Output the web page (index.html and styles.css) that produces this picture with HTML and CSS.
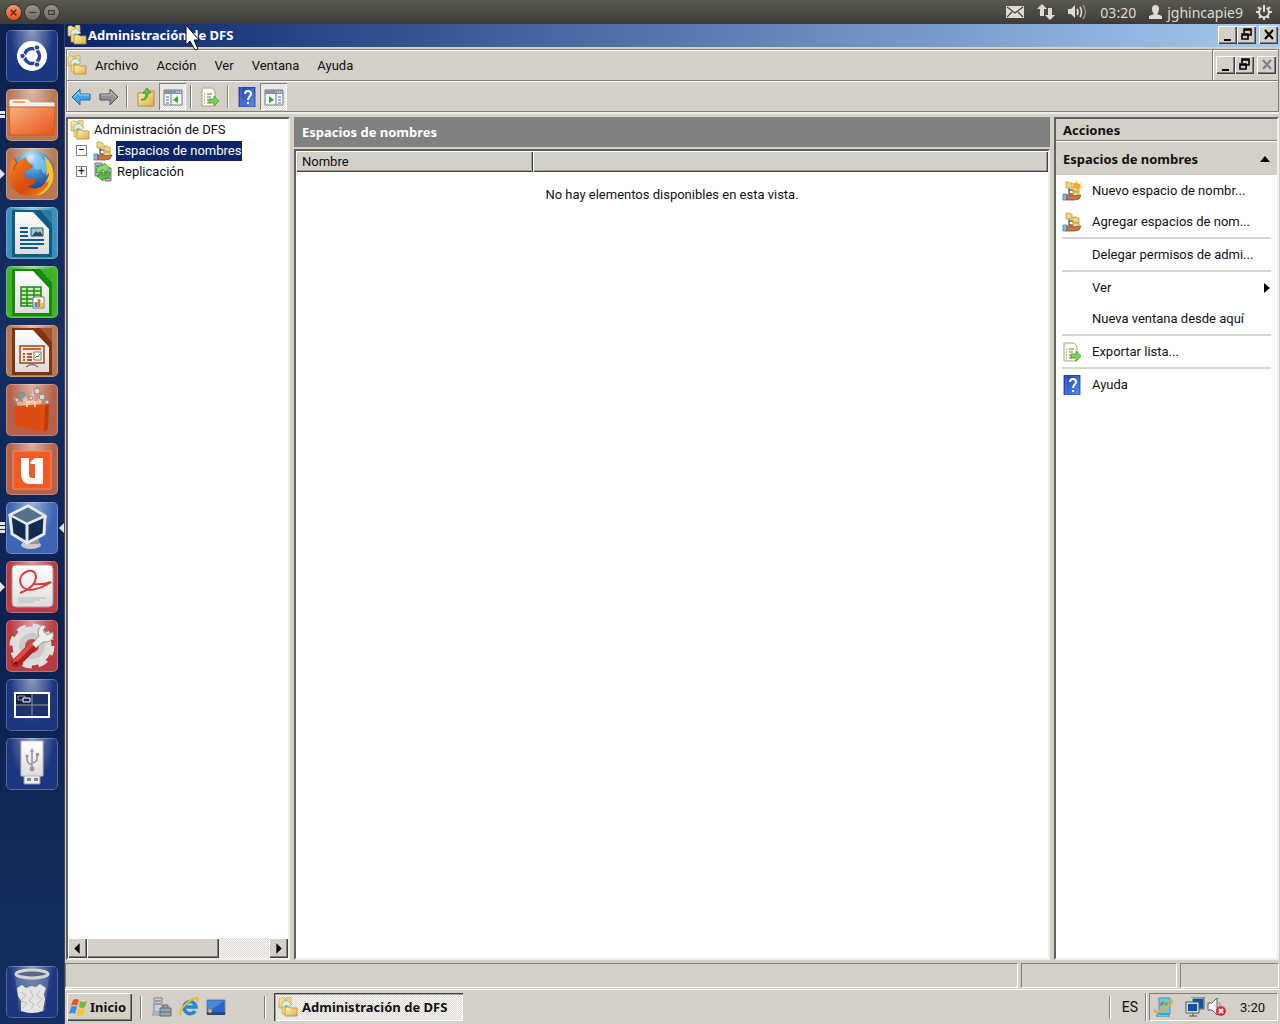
FILE: index.html
```html
<!DOCTYPE html>
<html lang="es">
<head>
    <meta charset="UTF-8">
    <meta name="viewport" content="width=device-width, initial-scale=1.0">
    <title>Administración de DFS</title>
    <link rel="stylesheet" href="styles.css">
</head>
<body>
    <!-- Shared icons -->
    <svg class="sprite" aria-hidden="true">
        <defs>
            <linearGradient id="gFolder" x1="0" y1="0" x2="1" y2="1">
                <stop offset="0" stop-color="#fff0b0"/><stop offset="1" stop-color="#e0b04c"/>
            </linearGradient>
            <linearGradient id="gHelp" x1="0" y1="0" x2="1" y2="1">
                <stop offset="0" stop-color="#1c3fae"/><stop offset="1" stop-color="#5f8cf0"/>
            </linearGradient>
            <linearGradient id="gPaper" x1="0" y1="0" x2="0" y2="1">
                <stop offset="0" stop-color="#fff"/><stop offset="1" stop-color="#dcdcdc"/>
            </linearGradient>
            <linearGradient id="gOrange" x1="0" y1="0" x2="1" y2="1">
                <stop offset="0" stop-color="#f6b27c"/><stop offset="1" stop-color="#e9501b"/>
            </linearGradient>
            <radialGradient id="gGlobe" cx=".45" cy=".15" r=".9">
                <stop offset="0" stop-color="#d5f1ff"/><stop offset=".35" stop-color="#4ba0dc"/><stop offset="1" stop-color="#0b2a6b"/>
            </radialGradient>
            <linearGradient id="gFox" x1="0" y1="0" x2="1" y2="1">
                <stop offset="0" stop-color="#f08a24"/><stop offset=".6" stop-color="#d8480c"/><stop offset="1" stop-color="#f3a01c"/>
            </linearGradient>
        </defs>
        <symbol id="dfs" viewBox="0 0 20 20">
            <path d="M1 2l1-1h3l1 1h3v9H1z" fill="url(#gFolder)" stroke="#c99f45" stroke-width=".7"/>
            <path d="M8 2l1-2h3l1 1v6H8z" fill="#f3d77e" stroke="#c99f45" stroke-width=".7"/>
            <path d="M4 10q-1-5 4-6l1-1 5 5-5 2 0-2q-3 0-3 3z" fill="#d5f4f0" stroke="#6fa9b0" stroke-width=".6"/>
            <path d="M4 11l1-1h3l1 1v6H4z" fill="#f3d77e" stroke="#c99f45" stroke-width=".7"/>
            <path d="M7 12l1-2h4l1 1h6v8H7z" fill="url(#gFolder)" stroke="#b98a33" stroke-width=".8"/>
        </symbol>
        <symbol id="names" viewBox="0 0 20 20">
            <path d="M7 6v7h4M7 9h4" stroke="#222" fill="none"/>
            <path d="M4 1h3l1 1h2v5H4z" fill="#f3d77e" stroke="#c0973a" stroke-width=".8"/>
            <path d="M11 5h3l1 1h2v5h-6zM11 10h3l1 1h2v4h-6z" fill="#f3d77e" stroke="#c0973a" stroke-width=".8"/>
            <path d="M1 13h4v6H1z" fill="#7fbadb" stroke="#4b7ea6" stroke-width=".8"/>
            <path d="M5 14h5l2 1 7-1-2 4-5 1H5z" fill="#c9763f" stroke="#8e4a22" stroke-width=".8"/>
        </symbol>
        <symbol id="repl" viewBox="0 0 20 20">
            <path d="M2 1h7v13H2zM12 6h6v13h-6z" fill="#b4b9bd" stroke="#747a80"/>
            <path d="M3 4h5M13 16h4" stroke="#59616a"/>
            <path d="M3 10Q3 3 11 3V1l6 5-6 5V8q-4-1-4 3z" fill="#8bdc6e" stroke="#2f8c27" stroke-width=".8"/>
            <path d="M17 10q0 7-7 7v2l-6-5 6-4v3q3 0 3-3z" fill="#57bd40" stroke="#2f8c27" stroke-width=".8"/>
        </symbol>
        <symbol id="export" viewBox="0 0 20 20">
            <path d="M2 1h10l3 3v15H2z" fill="#fffde9" stroke="#a5a38d"/>
            <path d="M4 7h1M7 7h5M4 10h1M7 10h4M4 13h1M7 13h3M4 16h1M7 16h3" stroke="#6d6d78"/>
            <path d="M9 12h5V9l5 5-5 5v-3H9z" fill="#76d64b" stroke="#3f9e2b" stroke-width=".8"/>
        </symbol>
        <symbol id="help" viewBox="0 0 20 20">
            <path d="M2 0h16v20H2z" fill="url(#gHelp)" stroke="#1b3690" stroke-width=".8"/>
            <path d="M4 0v20" stroke="#5676d0"/>
            <path d="M8 7c0-4 6-4 6 0 0 2-3 3-3 6M11 15v2" fill="none" stroke="#fff" stroke-width="2"/>
        </symbol>
        <symbol id="minimize" viewBox="0 0 16 16"><path d="M4 13h7" stroke="#000" stroke-width="2"/></symbol>
        <symbol id="restore" viewBox="0 0 16 16">
            <path d="M5 6V2h7v6H9M5 3h7M3 7h6v5H3zM3 8h6" fill="none" stroke="#000" stroke-width="1.6"/>
        </symbol>
        <symbol id="close" viewBox="0 0 16 16"><path d="M4 3l8 9M12 3l-8 9" stroke="currentColor" stroke-width="2"/></symbol>
        <symbol id="paneWindow" viewBox="0 0 20 20">
            <path d="M1 3h18v15H1z" fill="#f7f7f7" stroke="#6f7d91"/>
            <path d="M1 3h18v4H1z" fill="#8793a5"/>
            <path d="M13 5h1M15 5h1M17 5h1" stroke="#fff"/>
        </symbol>
    </svg>

    <header class="panel">
        <div class="panel-buttons">
            <button class="round round-close" aria-label="Cerrar"><svg viewBox="0 0 16 16"><path d="M5 5l6 6M11 5l-6 6" stroke="#5a2412" stroke-width="1.6"/></svg></button>
            <button class="round" aria-label="Minimizar"><svg viewBox="0 0 16 16"><path d="M5 8h7" stroke="#3a3935" stroke-width="1.2"/></svg></button>
            <button class="round" aria-label="Restaurar"><svg viewBox="0 0 16 16"><path d="M5 6h6v4H5z" stroke="#3a3935" stroke-width="1.2" fill="none"/></svg></button>
        </div>
        <div class="indicators">
            <svg width="18" height="14" viewBox="0 0 18 14"><path d="M0 1h18v12H0z" fill="#dfdbd2"/><path d="M1 2l8 6 8-6M1 12l5-5M17 12l-5-5" fill="none" stroke="#45443e" stroke-width="1.2"/></svg>
            <svg width="18" height="16" viewBox="0 0 18 16"><path d="M5 0l5 5H7v7H3V5H0zM13 16l-5-5h3V4h4v7h3z" fill="#dfdbd2"/></svg>
            <svg width="19" height="16" viewBox="0 0 19 16"><path d="M0 5h3l4-4v13l-4-4H0z" fill="#dfdbd2"/><path d="M9 5q2 3 0 6M12 3q3 5 0 10" fill="none" stroke="#dfdbd2" stroke-width="1.6"/><path d="M15 1q5 7 0 14" fill="none" stroke="#8d8a81" stroke-width="1.6"/></svg>
            <span class="clock">03:20</span>
            <span class="user">
                <svg width="13" height="14" viewBox="0 0 13 14"><path d="M3 4a3.500 4 0 0 1 7 0q0 3-2 5l5 2v3H0v-3l5-2Q3 7 3 4z" fill="#dfdbd2"/></svg>
                jghincapie9
            </span>
            <svg width="16" height="16" viewBox="0 0 16 16"><g stroke="#dfdbd2" fill="none"><path d="M5.500 4a5 5 0 1 0 5 0" stroke-width="2"/><path d="M8 1v7" stroke-width="2"/><path d="M0 8h3M13 8h3M2 3l2 2M14 3l-2 2M3 14l2-2M13 14l-2-2M8 13v3" stroke-width="2"/></g></svg>
        </div>
    </header>

    <div class="desktop">
        <nav class="launcher" aria-label="Lanzador">
            <button class="tile dash" aria-label="Inicio de Dash">
                <svg viewBox="0 0 52 52"><circle cx="26" cy="26" r="15" fill="#fff"/><circle cx="26" cy="26" r="7.500" fill="none" stroke="#28449a" stroke-width="3.500"/><path d="M26 26H14M26 26l6-10M26 26l6 10" stroke="#fff" stroke-width="1.500"/><circle cx="26" cy="26" r="5.500" fill="#fff"/><g fill="#28449a" stroke="#fff"><circle cx="16.500" cy="26" r="2.700"/><circle cx="31" cy="17.500" r="2.700"/><circle cx="31" cy="34.500" r="2.700"/></g></svg>
            </button>
            <button class="tile brown two" aria-label="Carpeta personal">
                <svg viewBox="0 0 52 52"><path d="M4 11h18l3 3h23v10H4z" fill="#f3f1ef" stroke="#fff"/><path d="M7 13h12" stroke="#f1a36c" stroke-width="2"/><path d="M3 18h46l-1 28H4z" fill="url(#gOrange)" stroke="#d95620"/></svg>
            </button>
            <button class="tile brown one" aria-label="Firefox">
                <svg viewBox="0 0 52 52"><circle cx="27" cy="24" r="21" fill="url(#gGlobe)"/><path d="M29 10l5-2 3 4 4 1-1 5 3 4-5 4-3-5-5 1-3-5z" fill="#8fd0f4" opacity=".6"/><path d="M8 9l3 5q5-2 9-5 0 3 3 6l4 2q0 4-6 5-3 2-3 6 4 5 9 2 3 2 3 2-3 7-9 6 10 6 18-3 7-8 5-20 6 10 2 19-5 14-20 14Q7 48 3 32 1 21 8 9z" fill="url(#gFox)"/><path d="M38 8q12 9 9 24-4 13-17 16 12-7 13-15l-4 2q4-6 4-10l-3 3q2-10-2-20z" fill="#f9c232"/><path d="M8 10l3 5q-3 3-3 7" stroke="#b8420b" fill="none"/></svg>
            </button>
            <button class="tile writer" aria-label="LibreOffice Writer">
                <svg viewBox="0 0 52 52"><path d="M6 3h29l11 12v35H6z" fill="#0e5b83"/><path d="M9 5h18l16 17v25H9z" fill="url(#gPaper)"/><path d="M34 3h12v14z" fill="#2c7ba7"/><path d="M14 21h8M14 25h8M14 29h8M14 33h24M14 37h24M14 41h18" stroke="#0e5b83" stroke-width="2"/><path d="M25 21h12v8H25z" fill="#8fcaf0" stroke="#0e5b83"/><path d="M26 29l4-5 2 2 2-2 3 5z" fill="#39464d"/><circle cx="34" cy="23" r="1.500" fill="#f7c33b"/></svg>
            </button>
            <button class="tile calc" aria-label="LibreOffice Calc">
                <svg viewBox="0 0 52 52"><path d="M6 3h29l11 12v35H6z" fill="#178a08"/><path d="M9 5h18l16 17v25H9z" fill="url(#gPaper)"/><path d="M34 3h12v14z" fill="#39b124"/><path d="M15 21h20v19H15zM15 25h20M15 29h20M15 33h20M15 37h20M21 21v19M28 21v19" fill="#c9f0bd" stroke="#1a8a0c" stroke-width="1.500"/><path d="M27 31h11v11H27z" fill="#fff" stroke="#777"/><path d="M30 41v-5" stroke="#2d96d8" stroke-width="3"/><path d="M33 41v-8" stroke="#e2722e" stroke-width="3"/><path d="M36 41v-4" stroke="#f2be21" stroke-width="3"/></svg>
            </button>
            <button class="tile brown" aria-label="LibreOffice Impress">
                <svg viewBox="0 0 52 52"><path d="M6 3h29l11 12v35H6z" fill="#833311"/><path d="M9 5h18l16 17v25H9z" fill="url(#gPaper)"/><path d="M34 3h12v14z" fill="#a4532c"/><path d="M14 21h24v17H14z" fill="#fbe8db" stroke="#a8430f" stroke-width="1.500"/><path d="M17 24h18" stroke="#d3622a" stroke-width="2"/><path d="M17 29h2M17 32h2M17 35h2M21 29h5M21 32h5M21 35h5" stroke="#8b330e" stroke-width="1.500"/><path d="M28 27h7v8h-7z" fill="#fff" stroke="#777"/><path d="M29 33l2-2 1 1 2-3" fill="none" stroke="#2a9d1e"/><path d="M26 38v2M20 42q6-5 12 0" fill="none" stroke="#777" stroke-width="1.500"/></svg>
            </button>
            <button class="tile rust" aria-label="Centro de software">
                <svg viewBox="0 0 52 52"><path d="M12 22l-5-9 10 6-1-12 7 10 4-12 2 13 9-8-3 11 6-3-4 5z" fill="#f4dcd0" opacity=".6"/><g fill="#d9d5d2" stroke="#958680"><circle cx="16" cy="11" r="3" fill="#6e9dc1"/><circle cx="31" cy="7" r="3"/><circle cx="25" cy="14" r="2"/><circle cx="36" cy="13" r="3"/><circle cx="11" cy="16" r="2"/><circle cx="41" cy="18" r="2"/></g><path d="M8 22l33-2-1 28-6-1-25-5z" fill="#dd4d11"/><path d="M39 22l4-2-1 25-4 3z" fill="#b83c0a"/><path d="M21 23v-5h8v5" fill="none" stroke="#ffd1a4" stroke-width="2"/></svg>
            </button>
            <button class="tile rust" aria-label="Ubuntu One">
                <svg viewBox="0 0 52 52"><path d="M7 8h38v38H7z" fill="#f15a24" stroke="#ff8d60"/><path d="M15 15h8v16q0 4 3 4h3V21h-4l-1-2 5-4h8v26H25q-10 0-10-10z" fill="#fff"/></svg>
            </button>
            <button class="tile blue three focused" aria-label="VirtualBox">
                <svg viewBox="0 0 52 52"><ellipse cx="25" cy="43" rx="10" ry="4" fill="#c7cbd1"/><path d="M18 35h15v7H18z" fill="#8d97a6"/><path d="M22 4l17 10-1 18-17 9L6 32 4 13z" fill="#0e2d4f" stroke="#e5e9ee" stroke-width="3" stroke-linejoin="round"/><path d="M4 13l17 9 18-8-17-10z" fill="#53718c" stroke="#e5e9ee" stroke-width="2.500"/><path d="M21 22v20" stroke="#e5e9ee" stroke-width="3"/></svg>
            </button>
            <button class="tile red one" aria-label="Visor de documentos">
                <svg viewBox="0 0 52 52"><rect x="6" y="4" width="41" height="42" rx="4" fill="url(#gPaper)" stroke="#a39a97"/><path d="M14 32q16-6 16-17-1-6-8-5-8 3-8 10 1 8 10 9 11-1 21-8-8 3-17 2" fill="none" stroke="#d83c3c" stroke-width="2"/><path d="M12 37h28M12 39h22M12 41h16" stroke="#bdbdbd"/></svg>
            </button>
            <button class="tile red" aria-label="Configuración del sistema">
                <svg viewBox="0 0 52 52"><circle cx="26" cy="26" r="15" fill="none" stroke="#dedede" stroke-width="9"/><circle cx="26" cy="26" r="20" fill="none" stroke="#dedede" stroke-width="5" stroke-dasharray="9 6.700"/><circle cx="26" cy="26" r="13" fill="#c9c9c9"/><circle cx="26" cy="26" r="7" fill="#bd5052"/><path d="M10 43l18-18" stroke="#ad2222" stroke-width="9" stroke-linecap="round"/><path d="M9 41l18-18" stroke="#dd4c45" stroke-width="4" stroke-linecap="round"/><path d="M26 24l7-8q-3-6 3-11l4 1-3 5 4 4 6-3q2 8-6 10l-4 0-7 6z" fill="#eceee8" stroke="#888" stroke-width=".8"/><circle cx="10" cy="43" r="1.500" fill="#6b1111"/></svg>
            </button>
            <button class="tile navy" aria-label="Selector de áreas de trabajo">
                <svg viewBox="0 0 52 52"><path d="M9 14h34v24H9z" fill="#1b3168" stroke="#fff" stroke-width="2"/><path d="M10 15h15v10H10z" fill="#0e1c45"/><path d="M26 15v22M10 26h32" stroke="#9b9a94"/><path d="M12 17h7v4h-7z" fill="none" stroke="#999"/><path d="M17 19h7v4h-7z" fill="#122252" stroke="#fff"/></svg>
            </button>
            <button class="tile navy" aria-label="Memoria USB">
                <svg viewBox="0 0 52 52"><path d="M18 37h16v9H18z" fill="#ededed" stroke="#999"/><path d="M15 3h22v35H15z" fill="url(#gPaper)" stroke="#b7b7b7"/><path d="M26 13v17M21 18v4q0 3 5 5M31 17v4q0 3-5 4" fill="none" stroke="#999" stroke-width="1.600"/><path d="M24 14l2-4 2 4z" fill="#999"/><circle cx="26" cy="31" r="2.500" fill="#999"/><circle cx="21" cy="18" r="1.500" fill="#999"/><path d="M30 15h3v3h-3z" fill="#999"/><path d="M21 40h4v3h-4zM28 40h4v3h-4z" fill="#888"/></svg>
            </button>
            <button class="tile navy trash" aria-label="Papelera">
                <svg viewBox="0 0 52 52"><path d="M9 9l4 36q13 4 26 0l4-36z" fill="#8592bb" opacity=".35"/><path d="M11 22l5-3 4 3 5-2 5 1 4-3 6 4-2 6 1 5-2 12q-11 4-22 0l0-10-3-5z" fill="#e4e4e2"/><path d="M14 26l6 3-5 6 6 2-4 5M24 24l3 6-4 5 5 3-3 5M34 24l-3 6 5 3-5 5 3 4" fill="none" stroke="#bdbdbb"/><ellipse cx="26" cy="8" rx="16" ry="4" fill="#5a668f" stroke="#d4d4d2" stroke-width="3"/></svg>
            </button>
        </nav>

        <main class="window">
            <div class="titlebar">
                <svg class="icon"><use href="#dfs"/></svg>
                <h1>Administración de DFS</h1>
                <div class="caption-buttons">
                    <button aria-label="Minimizar"><svg><use href="#minimize"/></svg></button>
                    <button aria-label="Restaurar"><svg><use href="#restore"/></svg></button>
                    <button class="spaced" aria-label="Cerrar"><svg><use href="#close"/></svg></button>
                </div>
            </div>

            <div class="bars">
                <div class="menubar">
                    <svg class="icon"><use href="#dfs"/></svg>
                    <div class="menus">
                        <button>Archivo</button>
                        <button>Acción</button>
                        <button>Ver</button>
                        <button>Ventana</button>
                        <button>Ayuda</button>
                    </div>
                    <div class="caption-buttons child">
                        <button aria-label="Minimizar ventana"><svg><use href="#minimize"/></svg></button>
                        <button aria-label="Restaurar ventana"><svg><use href="#restore"/></svg></button>
                        <button class="spaced" disabled aria-label="Cerrar ventana"><svg><use href="#close"/></svg></button>
                    </div>
                </div>
                <div class="toolbar">
                    <button class="tool" aria-label="Atrás"><svg class="icon" viewBox="0 0 20 20"><path d="M1 10l8-8v5h10v6H9v5z" fill="#43a5e8" stroke="#1c6cac"/><path d="M3 10l5-5v3h10" fill="none" stroke="#9fdcff"/></svg></button>
                    <button class="tool" aria-label="Adelante"><svg class="icon" viewBox="0 0 20 20"><path d="M19 10l-8-8v5H1v6h10v5z" fill="#919191" stroke="#555"/><path d="M2 8h10V5l5 5" fill="none" stroke="#c4c4c4"/></svg></button>
                    <span class="divider"></span>
                    <button class="tool" aria-label="Subir un nivel"><svg class="icon" viewBox="0 0 20 20"><path d="M2 6h7l2-2h7v15H2z" fill="url(#gFolder)" stroke="#b98a33"/><path d="M5 13q5-1 5-7H7l4-5 4 5h-3q0 8-7 7z" fill="#62c83b" stroke="#2d8e1f" stroke-width=".8"/></svg></button>
                    <button class="tool pressed" aria-label="Mostrar u ocultar árbol"><svg class="icon"><use href="#paneWindow"/><path d="M8 7v11" stroke="#6f7d91"/><path d="M3 10h3M3 13h3M3 16h3" stroke="#4b6c9c"/><path d="M15 9v7l-5-3z" fill="#3ca32a"/></svg></button>
                    <span class="divider"></span>
                    <button class="tool" aria-label="Exportar lista"><svg class="icon"><use href="#export"/></svg></button>
                    <span class="divider"></span>
                    <button class="tool" aria-label="Ayuda"><svg class="icon"><use href="#help"/></svg></button>
                    <button class="tool pressed" aria-label="Mostrar u ocultar acciones"><svg class="icon"><use href="#paneWindow"/><path d="M12 7v11" stroke="#6f7d91"/><path d="M14 10h3M14 13h3M14 16h3" stroke="#4b6c9c"/><path d="M5 9v7l5-3z" fill="#3ca32a"/></svg></button>
                </div>
            </div>

            <div class="content">
                <section class="tree-pane">
                    <ul class="tree">
                        <li class="root"><svg class="icon"><use href="#dfs"/></svg><span>Administración de DFS</span></li>
                        <li><button class="expander" aria-label="Contraer">−</button><svg class="icon"><use href="#names"/></svg><span class="selected">Espacios de nombres</span></li>
                        <li><button class="expander" aria-label="Expandir">+</button><svg class="icon"><use href="#repl"/></svg><span>Replicación</span></li>
                    </ul>
                    <div class="scrollbar">
                        <button aria-label="Desplazar a la izquierda"><svg viewBox="0 0 16 16"><path d="M10 3v10L5 8z"/></svg></button>
                        <div class="thumb"></div>
                        <button class="end" aria-label="Desplazar a la derecha"><svg viewBox="0 0 16 16"><path d="M6 3v10l5-5z"/></svg></button>
                    </div>
                </section>

                <section class="list-pane">
                    <h2>Espacios de nombres</h2>
                    <div class="list">
                        <table>
                            <thead><tr><th class="name">Nombre</th><th></th></tr></thead>
                            <tbody><tr><td colspan="2">No hay elementos disponibles en esta vista.</td></tr></tbody>
                        </table>
                    </div>
                </section>

                <aside class="actions">
                    <h2>Acciones</h2>
                    <h3>Espacios de nombres <svg width="10" height="6" viewBox="0 0 10 6"><path d="M0 6l5-6 5 6z"/></svg></h3>
                    <ul>
                        <li><button><svg class="icon"><use href="#names"/><path d="M15 0l1 3 3-1-1 3 2 2-3 0-1 3-2-3-3 0 1-2-2-3h3z" fill="#f8a921"/></svg>Nuevo espacio de nombr...</button></li>
                        <li><button><svg class="icon"><use href="#names"/></svg>Agregar espacios de nom...</button></li>
                        <li class="group"><button><span class="icon"></span>Delegar permisos de admi...</button></li>
                        <li class="group"><button><span class="icon"></span>Ver<svg class="more" width="6" height="10" viewBox="0 0 6 10"><path d="M0 0l6 5-6 5z"/></svg></button></li>
                        <li><button><span class="icon"></span>Nueva ventana desde aquí</button></li>
                        <li class="group"><button><svg class="icon"><use href="#export"/></svg>Exportar lista...</button></li>
                        <li class="group"><button><svg class="icon"><use href="#help"/></svg>Ayuda</button></li>
                    </ul>
                </aside>
            </div>

            <div class="statusbar"><span></span><span></span><span></span></div>

            <footer class="taskbar">
                <button class="start"><svg class="icon" viewBox="0 0 20 20"><path d="M4 3q3-2 6 0L8 9q-3-2-6 0z" fill="#e9572b"/><path d="M11 4q4 2 7 0l-2 6q-3 2-6 0z" fill="#70b93b"/><path d="M2 10q3-2 6 0l-2 7q-3-2-6 0z" fill="#3c8ee0"/><path d="M9 11q3 2 7 0l-2 7q-4 2-7 0z" fill="#f8c52e"/></svg>Inicio</button>
                <span class="divider"></span>
                <div class="quick">
                    <button aria-label="Administrador del servidor"><svg class="icon" viewBox="0 0 20 20"><path d="M2 1h8v14H2z" fill="#cbd1d6" stroke="#77838d"/><path d="M3 4h6M3 7h6" stroke="#5a6975"/><path d="M0 15h10v4H0z" fill="#a9b3ba"/><path d="M8 11h11v8H8zM11 11V8h5v3M8 15h11" fill="#95a3ad" stroke="#5e6c77"/></svg></button>
                    <button aria-label="Internet Explorer"><svg class="icon" viewBox="0 0 20 20"><path d="M16 14a6 6 0 1 1 1-4H6" fill="none" stroke="#2389dd" stroke-width="3.500"/><path d="M2 18Q-1 15 6 8T18 1q2 1 0 4" fill="none" stroke="#f2b925" stroke-width="2"/></svg></button>
                    <button aria-label="Mostrar escritorio"><svg class="icon" viewBox="0 0 20 20"><path d="M1 3h18v14H1z" fill="#2c64c6" stroke="#7185a7"/><path d="M2 4h16L5 13H2z" fill="#4a86de"/><path d="M1 15h18v3H1z" fill="#26487d"/><circle cx="4" cy="14" r="2" fill="#f0a63b"/></svg></button>
                </div>
                <span class="divider"></span>
                <button class="task"><svg class="icon"><use href="#dfs"/></svg>Administración de DFS</button>
                <span class="divider language-divider"></span>
                <span class="language">ES</span>
                <span class="divider tall"></span>
                <div class="tray">
                    <svg class="icon" viewBox="0 0 20 20"><path d="M5 1h11v16H5zM3 17h12v3H3z" fill="#6cccdc" stroke="#3f9dae"/><path d="M7 5l3-1-1 4-3 1z" fill="#e85c34"/><path d="M11 5l3 1-1 3-3-1z" fill="#5ab947"/><path d="M1 12q-2 5 5 2T17 7q3-4-1-4" fill="none" stroke="#f4a93e" stroke-width="2"/></svg>
                    <svg class="icon network" viewBox="0 0 20 20"><path d="M7 1h12v11H7z" fill="#0757a6" stroke="#e9e9e9"/><path d="M6 0h13v12h-5" fill="none" stroke="#4b5560"/><path d="M2 6h11v9H2z" fill="#0757a6" stroke="#fff" stroke-width="1.500"/><path d="M1 5h13v11H1zM4 19h8M8 16v3" fill="none" stroke="#4b5560"/></svg>
                    <svg class="icon" viewBox="0 0 20 20"><path d="M1 6h4l5-5v17l-5-5H1z" fill="#f7f7f7" stroke="#59595f"/><path d="M12 5q3 4 0 8" fill="none" stroke="#888"/><circle cx="14" cy="14" r="5" fill="#e03131"/><path d="M12 12l4 4M16 12l-4 4" stroke="#fff" stroke-width="2"/></svg>
                    <span>3:20</span>
                </div>
            </footer>
        </main>
    </div>

    <svg class="cursor" viewBox="0 0 14 27" aria-hidden="true"><path d="M1 1v20l4-4 5 9 3-1-4-9h5z" fill="#fff" stroke="#111"/></svg>
</body>
</html>
```
FILE: styles.css
```css
:root {
    --face: #d4d0c8;
    --light: #ffffff;
    --shadow: #808080;
    --dark: #404040;
    --navy: #0a246a;
    --raised: inset 1px 1px #fff, inset -1px -1px #404040, inset -2px -2px #808080;
    --dither: repeating-conic-gradient(#f6f5f3 0 25%, #dedbd5 0 50%) 0 0 / 2px 2px;
}

* {
    box-sizing: border-box;
}

body {
    margin: 0;
    height: 100vh;
    display: flex;
    flex-direction: column;
    overflow: hidden;
    font-family: Roboto, "Liberation Sans", sans-serif;
    font-size: 13px;
    color: #111;
}

button {
    margin: 0;
    padding: 0;
    border: none;
    background: none;
    font: inherit;
    color: inherit;
}

ul {
    list-style: none;
    margin: 0;
    padding: 0;
}

h1, h2, h3 {
    margin: 0;
    font-family: "Noto Sans", sans-serif;
    font-size: 13px;
    font-weight: bold;
}

svg {
    display: block;
    flex: none;
}

.sprite {
    position: absolute;
    width: 0;
    height: 0;
}

.icon {
    width: 20px;
    height: 20px;
    flex: none;
}

/* Ubuntu panel */
.panel {
    height: 24px;
    flex: none;
    display: flex;
    align-items: center;
    justify-content: space-between;
    padding: 0 8px 0 6px;
    background: linear-gradient(#5b5a50, #3c3b37);
    color: #dfdbd2;
    font-family: "Noto Sans", sans-serif;
    font-size: 14px;
}

.panel-buttons {
    display: flex;
    gap: 4px;
}

.round {
    width: 15px;
    height: 15px;
    border-radius: 50%;
    background: linear-gradient(#96948c, #6d6b64);
    box-shadow: 0 0 0 1px #35342f;
}

.round-close {
    background: linear-gradient(#f79270, #e6511d);
}

.indicators {
    display: flex;
    align-items: center;
    gap: 13px;
}

.user {
    display: flex;
    align-items: center;
    gap: 5px;
}

.desktop {
    flex: 1;
    min-height: 0;
    display: flex;
}

/* Launcher */
.launcher {
    width: 65px;
    flex: none;
    display: flex;
    flex-direction: column;
    gap: 7px;
    padding: 6px 7px 6px 6px;
    background: linear-gradient(#0d1f4e, #153064 30%, #0d2150 60%, #152e61);
    border-right: 1px solid #3c4358;
}

.tile {
    position: relative;
    width: 52px;
    height: 52px;
    flex: none;
    border-radius: 5px;
    background: radial-gradient(ellipse at top, rgba(255, 255, 255, 0.5), transparent 60%) var(--tile);
    box-shadow: inset 0 0 0 1px rgba(255, 255, 255, 0.25);
}

.dash, .navy {
    --tile: #1c3780;
}

.brown {
    --tile: #b87853;
}

.writer {
    --tile: #3d8fba;
}

.calc {
    --tile: #40b32b;
}

.rust {
    --tile: #b5624a;
}

.blue {
    --tile: #3c66b3;
}

.red {
    --tile: #b93c42;
}

.trash {
    margin-top: auto;
}

/* marks for running programs */
.one::before, .focused::after {
    content: "";
    position: absolute;
    left: -6px;
    top: 21px;
    border: 5px solid transparent;
    border-left-color: #e4e4e4;
    border-right-width: 0;
}

.focused::after {
    left: 53px;
    border-left-width: 0;
    border-right: 5px solid #e4e4e4;
}

.two::before, .three::before {
    content: "";
    position: absolute;
    left: -6px;
    top: 22px;
    width: 5px;
    height: 7px;
    background: linear-gradient(#e4e4e4 3px, transparent 3px 4px, #e4e4e4 4px);
}

.three::before {
    top: 20px;
    height: 11px;
    background: repeating-linear-gradient(#e4e4e4 0 3px, transparent 3px 4px);
}

/* Remote window */
.window {
    flex: 1;
    min-width: 0;
    display: flex;
    flex-direction: column;
    background: var(--face);
}

.titlebar {
    height: 23px;
    flex: none;
    display: flex;
    align-items: center;
    gap: 1px;
    padding: 0 2px 1px;
    background: linear-gradient(90deg, #0a246a, #a6caf0);
    color: #fff;
}

.caption-buttons {
    display: flex;
    margin-left: auto;
}

.caption-buttons button {
    width: 19px;
    height: 18px;
    display: flex;
    align-items: center;
    justify-content: center;
    background: var(--face);
    box-shadow: var(--raised);
    color: #000;
}

.caption-buttons svg {
    width: 16px;
    height: 16px;
}

.caption-buttons .spaced {
    margin-left: 3px;
}

.caption-buttons button:disabled {
    color: #808080;
}

.bars {
    flex: none;
    margin: 2px 1px 0;
    border: 1px solid var(--shadow);
    box-shadow: inset 1px 1px #fff, 0 2px #eeece8;
}

.menubar {
    height: 31px;
    display: flex;
    align-items: center;
    border-bottom: 1px solid var(--shadow);
}

.menus {
    display: flex;
    gap: 18px;
    padding-left: 8px;
}

.child {
    align-self: stretch;
    align-items: center;
    padding: 0 2px 0 3px;
    border-left: 1px solid var(--shadow);
    box-shadow: inset 1px 0 #fff;
}

.toolbar {
    height: 30px;
    display: flex;
    align-items: center;
    padding: 1px 0 0 4px;
    box-shadow: inset 0 1px #fff;
}

.tool {
    width: 27px;
    height: 27px;
    display: flex;
    align-items: center;
    justify-content: center;
}

.tool:first-child {
    width: 20px;
    margin-right: 4px;
}

.pressed {
    background: var(--dither);
    box-shadow: inset 1px 1px #808080, inset -1px -1px #fff;
}

.divider {
    width: 2px;
    height: 23px;
    flex: none;
    margin: 0 4px;
    border-left: 1px solid var(--shadow);
    border-right: 1px solid var(--light);
}

.content {
    flex: 1;
    min-height: 0;
    display: flex;
    gap: 4px;
    padding: 5px 1px 3px;
}

.tree-pane, .list, .actions {
    background: #fff;
    border: 2px solid var(--dark);
    border-color: #606060 #f1efe9 #f1efe9 #606060;
}

.tree-pane {
    width: 224px;
    flex: none;
    display: flex;
    flex-direction: column;
}

.tree {
    flex: 1;
}

.tree li {
    height: 21px;
    display: flex;
    align-items: center;
    padding-left: 8px;
}

.tree .root {
    padding-left: 2px;
}

.tree span {
    height: 20px;
    line-height: 20px;
    padding: 0 1px;
    margin-left: 3px;
}

.tree .selected {
    background: var(--navy);
    color: #fff;
}

.expander {
    width: 11px;
    height: 11px;
    margin-right: 6px;
    border: 1px solid var(--shadow);
    background: #fff;
    font-size: 12px;
    line-height: 9px;
}

.scrollbar {
    height: 20px;
    display: flex;
    background: var(--dither);
}

.scrollbar button {
    width: 19px;
    padding: 1px;
    background: var(--face);
    box-shadow: var(--raised);
}

.thumb {
    width: 60%;
    background: var(--face);
    box-shadow: var(--raised);
}

.scrollbar .end {
    margin-left: auto;
}

.list-pane {
    flex: 1;
    min-width: 0;
    display: flex;
    flex-direction: column;
    gap: 2px;
}

.list-pane h2 {
    height: 30px;
    line-height: 30px;
    padding-left: 8px;
    background: var(--shadow);
    color: #fff;
}

.list {
    flex: 1;
}

table {
    width: 100%;
    border-collapse: collapse;
}

th {
    height: 21px;
    padding: 0 6px;
    background: var(--face);
    box-shadow: inset 1px 1px #fff, inset -1px -1px #404040, inset -2px -2px #a09d97;
    font-weight: normal;
    text-align: left;
}

.name {
    width: 237px;
}

td {
    padding: 15px 0;
    text-align: center;
}

.actions {
    width: 225px;
    flex: none;
}

.actions h2 {
    height: 22px;
    line-height: 22px;
    padding-left: 7px;
    background: var(--face);
    border-bottom: 1px solid var(--shadow);
}

.actions h3 {
    display: flex;
    align-items: center;
    justify-content: space-between;
    height: 34px;
    padding: 0 7px;
    background: var(--face);
    border-top: 1px solid #fff;
}

.actions ul {
    padding: 0 6px;
}

.actions li button {
    width: 100%;
    height: 31px;
    display: flex;
    align-items: center;
    gap: 10px;
    text-align: left;
    white-space: nowrap;
}

.actions .group {
    border-top: 2px solid #d9d6cf;
}

.more {
    margin-left: auto;
    margin-right: 1px;
}

.statusbar {
    height: 25px;
    flex: none;
    display: flex;
    gap: 3px;
    padding-right: 1px;
}

.statusbar span {
    border: 1px solid var(--shadow);
    border-color: #808080 #fff #fff #808080;
    width: 99px;
}

.statusbar span:first-child {
    flex: 1;
}

.statusbar span:nth-child(2) {
    width: 156px;
}

/* Windows taskbar */
.taskbar {
    height: 35px;
    flex: none;
    display: flex;
    align-items: center;
    margin-top: 1px;
    padding: 0 2px;
    border-top: 1px solid #fff;
}

.start, .task {
    display: flex;
    align-items: center;
    font-family: "Noto Sans", sans-serif;
    font-weight: bold;
}

.start {
    width: 65px;
    height: 28px;
    padding-left: 2px;
    gap: 1px;
    box-shadow: var(--raised);
}

.taskbar .divider {
    margin: 0 8px;
}

.quick {
    width: 106px;
    display: flex;
    gap: 7px;
    padding-left: 2px;
}

.task {
    width: 189px;
    height: 28px;
    padding-left: 4px;
    gap: 4px;
    background: var(--dither);
    box-shadow: inset 1px 1px #404040, inset 2px 2px #a0a0a0, inset -1px -1px #fff;
}

.taskbar .language-divider {
    margin-left: auto;
    margin-right: 11px;
}

.language {
    font-size: 14px;
}

.taskbar .tall {
    height: 28px;
    margin: 0 2px 0 7px;
}

.tray {
    width: 129px;
    height: 28px;
    display: flex;
    align-items: center;
    padding: 0 12px 0 4px;
    border: 1px solid var(--shadow);
    border-color: #808080 #fff #fff #808080;
}

.network {
    margin-left: 11px;
    margin-right: 2px;
}

.tray span {
    margin-left: auto;
}

.cursor {
    position: absolute;
    left: 185px;
    top: 24px;
    width: 14px;
    height: 27px;
}
```
